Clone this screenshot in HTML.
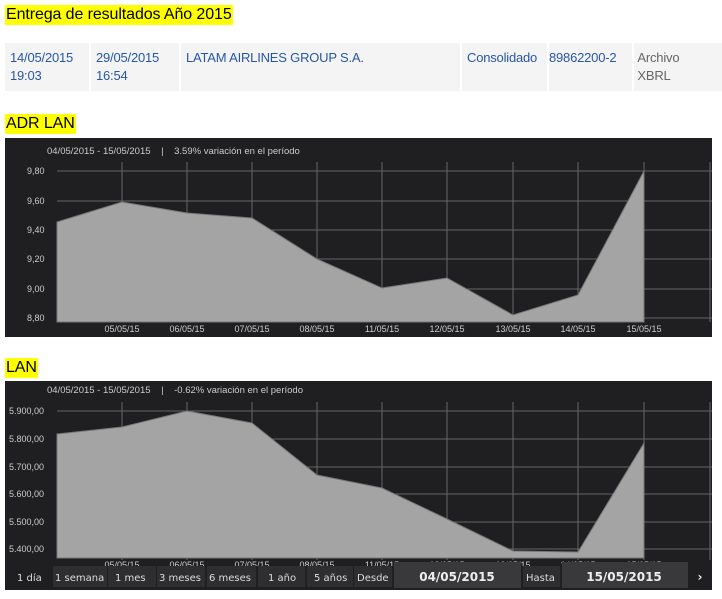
<!DOCTYPE html>
<html><head><meta charset="utf-8"><style>
body{margin:0;width:722px;height:599px;background:#fff;position:relative;overflow:hidden;font-family:"Liberation Sans",Arial,sans-serif}
.hl{position:absolute;background:#ffff00;font-size:16px;line-height:20px;color:#000;padding:0 1px;letter-spacing:-0.1px}
.cell{position:absolute;top:43px;height:48px;background:#f4f4f4;font-size:13px;line-height:18px;color:#2856a8;padding-top:6px;box-sizing:border-box;padding-left:5px;letter-spacing:-0.2px}
svg{position:absolute;left:0}
</style></head><body>
<div class="hl" style="left:5px;top:5px">Entrega de resultados Año 2015</div>
<div class="cell" style="left:5px;width:84px">14/05/2015<br>19:03</div>
<div class="cell" style="left:91px;width:88px">29/05/2015<br>16:54</div>
<div class="cell" style="left:181px;width:279px">LATAM AIRLINES GROUP S.A.</div>
<div class="cell" style="left:462px;width:85px">Consolidado</div>
<div class="cell" style="left:549px;width:83px;padding-left:0">89862200-2</div>
<div class="cell" style="left:634px;width:88px;padding-left:0;color:#666">&nbsp;Archivo<br>&nbsp;XBRL</div>
<div class="hl" style="left:5px;top:114px">ADR LAN</div>
<div class="hl" style="left:5px;top:358px">LAN</div>

<svg width="722" height="210" style="top:137px" viewBox="0 137 722 210" font-family="Liberation Sans,Arial,sans-serif">
<rect x="5" y="138" width="707" height="199" fill="#1f1f21"/>
<text x="47" y="154" font-size="9.5" fill="#ccc">04/05/2015 - 15/05/2015 &#160;&#160; | &#160;&#160; 3.59% variación en el período</text>
<g stroke="#666" stroke-width="1">
<line x1="57" y1="171" x2="712" y2="171"/><line x1="57" y1="201" x2="712" y2="201"/><line x1="57" y1="230" x2="712" y2="230"/><line x1="57" y1="259" x2="712" y2="259"/><line x1="57" y1="289" x2="712" y2="289"/><line x1="57" y1="318" x2="712" y2="318"/>
<line x1="122" y1="162" x2="122" y2="322"/><line x1="187" y1="162" x2="187" y2="322"/><line x1="252" y1="162" x2="252" y2="322"/><line x1="317" y1="162" x2="317" y2="322"/><line x1="382" y1="162" x2="382" y2="322"/><line x1="447" y1="162" x2="447" y2="322"/><line x1="513" y1="162" x2="513" y2="322"/><line x1="578" y1="162" x2="578" y2="322"/><line x1="644" y1="162" x2="644" y2="322"/><line x1="710" y1="162" x2="710" y2="322"/>
</g>
<polygon points="57,222 122,202 187,213 252,218 317,259 382,288 447,278 513,315 578,295 644,171 644,322 57,322" fill="#a4a4a4" stroke="#777" stroke-width="1"/>
<g font-size="9" fill="#ccc">
<text x="27" y="174">9,80</text><text x="27" y="204">9,60</text><text x="27" y="233">9,40</text><text x="27" y="262">9,20</text><text x="27" y="292">9,00</text><text x="27" y="321">8,80</text>
</g>
<g font-size="9" fill="#ccc" text-anchor="middle">
<text x="122" y="332">05/05/15</text><text x="187" y="332">06/05/15</text><text x="252" y="332">07/05/15</text><text x="317" y="332">08/05/15</text><text x="382" y="332">11/05/15</text><text x="447" y="332">12/05/15</text><text x="513" y="332">13/05/15</text><text x="578" y="332">14/05/15</text><text x="644" y="332">15/05/15</text>
</g>
</svg>

<svg width="722" height="220" style="top:379px" viewBox="0 379 722 220" font-family="Liberation Sans,Arial,sans-serif">
<rect x="5" y="381" width="707" height="209" fill="#1f1f21"/>
<text x="47" y="393" font-size="9.5" fill="#ccc">04/05/2015 - 15/05/2015 &#160;&#160; | &#160;&#160; -0.62% variación en el período</text>
<g stroke="#666" stroke-width="1">
<line x1="57" y1="411" x2="712" y2="411"/><line x1="57" y1="439" x2="712" y2="439"/><line x1="57" y1="467" x2="712" y2="467"/><line x1="57" y1="494" x2="712" y2="494"/><line x1="57" y1="522" x2="712" y2="522"/><line x1="57" y1="549" x2="712" y2="549"/>
<line x1="122" y1="402" x2="122" y2="560"/><line x1="187" y1="402" x2="187" y2="560"/><line x1="252" y1="402" x2="252" y2="560"/><line x1="317" y1="402" x2="317" y2="560"/><line x1="382" y1="402" x2="382" y2="560"/><line x1="447" y1="402" x2="447" y2="560"/><line x1="513" y1="402" x2="513" y2="560"/><line x1="578" y1="402" x2="578" y2="560"/><line x1="644" y1="402" x2="644" y2="560"/><line x1="710" y1="402" x2="710" y2="560"/>
</g>
<polygon points="57,434 122,427 187,411 252,423 317,475 382,488 447,519 513,551 578,552 644,443 644,558 57,558" fill="#a4a4a4" stroke="#777" stroke-width="1"/>
<g font-size="9" fill="#ccc">
<text x="9" y="414">5.900,00</text><text x="9" y="442">5.800,00</text><text x="9" y="470">5.700,00</text><text x="9" y="497">5.600,00</text><text x="9" y="525">5.500,00</text><text x="9" y="552">5.400,00</text>
</g>
<g font-size="9" fill="#ccc" text-anchor="middle">
<text x="122" y="568">05/05/15</text><text x="187" y="568">06/05/15</text><text x="252" y="568">07/05/15</text><text x="317" y="568">08/05/15</text><text x="382" y="568">11/05/15</text><text x="447" y="568">12/05/15</text><text x="513" y="568">13/05/15</text><text x="578" y="568">14/05/15</text><text x="644" y="568">15/05/15</text>
</g>
<g fill="#2e2e31">
<rect x="5" y="566" width="707" height="22" fill="#1f1f21"/>
<rect x="53" y="566" width="54" height="21"/><rect x="108" y="566" width="48" height="21"/><rect x="157" y="566" width="48" height="21"/><rect x="207" y="566" width="49" height="21"/><rect x="258" y="566" width="47" height="21"/><rect x="307" y="566" width="46" height="21"/><rect x="354" y="566" width="38" height="21"/>
<rect x="394" y="562" width="127" height="26" fill="#39393c"/><rect x="523" y="566" width="37" height="21"/><rect x="562" y="562" width="126" height="26" fill="#39393c"/>
</g>
<g font-size="10" fill="#ddd" font-family="DejaVu Sans,sans-serif">
<text x="17" y="581">1 día</text><text x="55" y="581">1 semana</text><text x="115" y="581">1 mes</text><text x="159" y="581">3 meses</text><text x="209" y="581">6 meses</text><text x="268" y="581">1 año</text><text x="314" y="581">5 años</text><text x="357" y="581">Desde</text><text x="526" y="581">Hasta</text>
</g>
<g font-size="12" fill="#eee" font-weight="bold" font-family="DejaVu Sans,sans-serif" text-anchor="middle">
<text x="457" y="581">04/05/2015</text><text x="624" y="581">15/05/2015</text><text x="700" y="581" font-size="12">›</text>
</g>
</svg>
</body></html>
